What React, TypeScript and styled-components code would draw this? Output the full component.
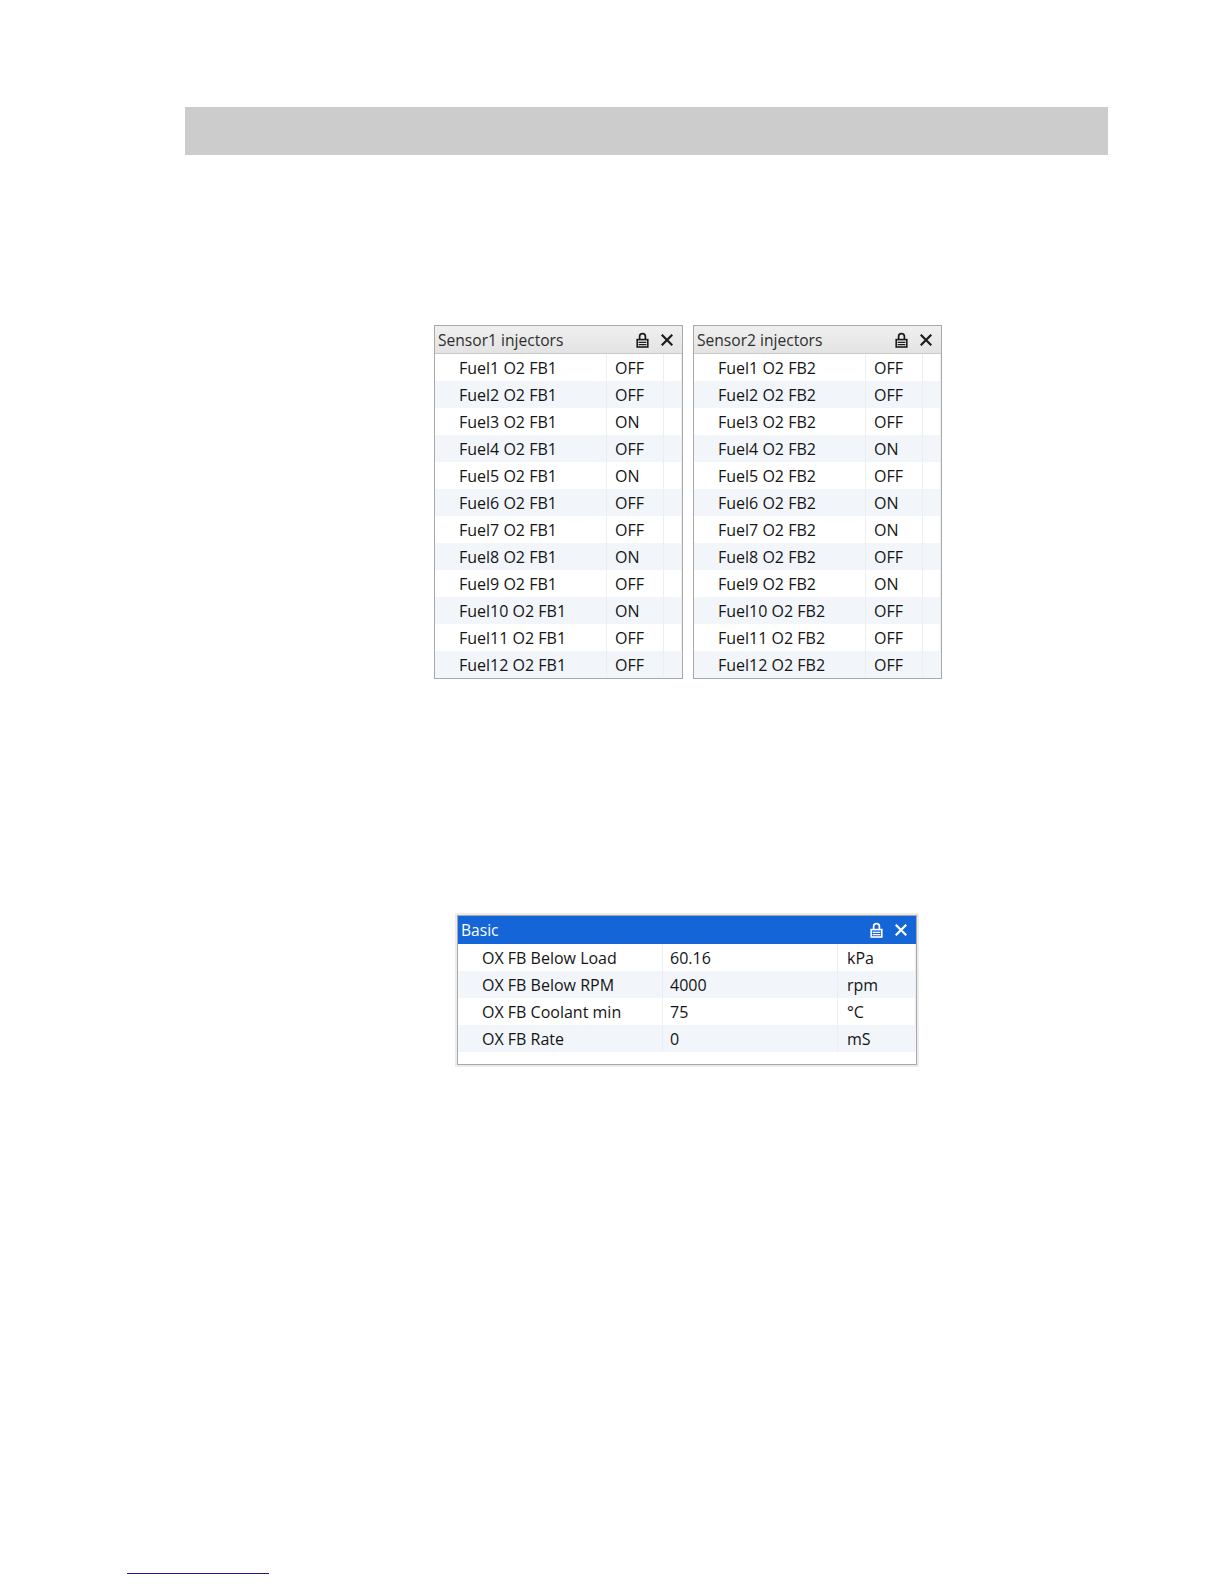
import React, { FC } from 'react'
import styled, { createGlobalStyle } from 'styled-components'

const GlobalStyle = createGlobalStyle`
	html, body {
		margin: 0;
		padding: 0;
		background: #ffffff;
	}
	body {
		font-family: 'Open Sans', 'Noto Sans', 'Liberation Sans', sans-serif;
		color: #141414;
	}
`

const Page = styled.div`
	width: 1224px;
	min-height: 1584px;
	display: flex;
	flex-direction: column;
`

const TopBar = styled.div`
	margin: 107px 0 0 185px;
	width: 923px;
	height: 48px;
	background: #cccccc;
`

const PanelRow = styled.div`
	display: flex;
	gap: 10px;
	margin: 170px 0 0 434px;
`

const Panel = styled.div<{ $width: number; $shadow?: boolean }>`
	width: ${({ $width }) => $width}px;
	border: 1px solid #a9a9a9;
	background: #ffffff;
	box-shadow: ${({ $shadow }) => ($shadow ? '0 0 0 2px #ececec' : 'none')};
`

const Header = styled.div<{ $active?: boolean }>`
	display: flex;
	align-items: center;
	height: 27px;
	padding: 0 9px 0 3px;
	background: ${({ $active }) =>
		$active ? '#1466d8' : 'linear-gradient(#f0f0f0, #e3e3e3)'};
	border-bottom: 1px solid ${({ $active }) => ($active ? '#1466d8' : '#c9c9c9')};
	color: ${({ $active }) => ($active ? '#ffffff' : '#2e2e2e')};
	font-size: 15.6px;
`

const Title = styled.span`
	flex: 1;
	white-space: nowrap;
`

const Tools = styled.div`
	display: flex;
	align-items: center;
	gap: 12px;
`

const Grid = styled.div<{ $cols: string; $pad?: number }>`
	display: grid;
	grid-template-columns: ${({ $cols }) => $cols};
	padding-bottom: ${({ $pad }) => $pad || 0}px;
`

const Cell = styled.div<{ $odd: boolean; $indent: number }>`
	height: 27px;
	display: flex;
	align-items: center;
	padding-left: ${({ $indent }) => $indent}px;
	font-size: 16px;
	white-space: nowrap;
	background: ${({ $odd }) => ($odd ? '#f2f6fa' : '#ffffff')};
	border-right: 1px solid #ebeef2;
	&:last-child {
		border-right: none;
	}
`

const BasicWrap = styled.div`
	margin: 236px 0 0 457px;
`

const FootRule = styled.div`
	margin: 508px 0 0 127px;
	width: 142px;
	height: 1px;
	background: #1b1b8a;
`

const LockIcon: FC<{ color: string }> = ({ color }) => (
	<svg width="13" height="16" viewBox="0 0 13 16" fill="none">
		<path d="M3.6 7.6V4.6a2.9 2.9 0 0 1 5.8 0V7.6" stroke={color} strokeWidth="1.7" />
		<rect x="1.2" y="7.6" width="10.6" height="7.4" stroke={color} strokeWidth="1.6" />
		<path d="M2.6 10.4h7.8M2.6 12.6h7.8" stroke={color} strokeWidth="1.2" />
	</svg>
)

const CloseIcon: FC<{ color: string }> = ({ color }) => (
	<svg width="12" height="12" viewBox="0 0 12 12">
		<path d="M1.5 1.5l9 9M10.5 1.5l-9 9" stroke={color} strokeWidth="2.2" strokeLinecap="square" />
	</svg>
)

type TableProps = {
	title: string
	width: number
	cols: string
	indents: number[]
	rows: string[][]
	active?: boolean
	padBottom?: number
}

const TablePanel: FC<TableProps> = ({ title, width, cols, indents, rows, active, padBottom }) => {
	const iconColor = active ? '#ffffff' : '#1c1c1c'
	return (
		<Panel $width={width} $shadow={active}>
			<Header $active={active}>
				<Title>{title}</Title>
				<Tools>
					<LockIcon color={iconColor} />
					<CloseIcon color={iconColor} />
				</Tools>
			</Header>
			<Grid $cols={cols} $pad={padBottom}>
				{rows.map((row, r) =>
					row.map((text, c) => (
						<Cell key={`${r}-${c}`} $odd={r % 2 === 1} $indent={indents[c]}>
							{text}
						</Cell>
					))
				)}
			</Grid>
		</Panel>
	)
}

const sensor1 = ['OFF', 'OFF', 'ON', 'OFF', 'ON', 'OFF', 'OFF', 'ON', 'OFF', 'ON', 'OFF', 'OFF']
const sensor2 = ['OFF', 'OFF', 'OFF', 'ON', 'OFF', 'ON', 'ON', 'OFF', 'ON', 'OFF', 'OFF', 'OFF']

const fuelRows = (bank: number, states: string[]) =>
	states.map((s, i) => [`Fuel${i + 1} O2 FB${bank}`, s, ''])

const basicRows = [
	['OX FB Below Load', '60.16', 'kPa'],
	['OX FB Below RPM', '4000', 'rpm'],
	['OX FB Coolant min', '75', '°C'],
	['OX FB Rate', '0', 'mS'],
]

const App = () => (
	<Page>
		<GlobalStyle />
		<TopBar />
		<PanelRow>
			<TablePanel
				title="Sensor1 injectors"
				width={247}
				cols="172px 57px 1fr"
				indents={[24, 8, 0]}
				rows={fuelRows(1, sensor1)}
			/>
			<TablePanel
				title="Sensor2 injectors"
				width={247}
				cols="172px 57px 1fr"
				indents={[24, 8, 0]}
				rows={fuelRows(2, sensor2)}
			/>
		</PanelRow>
		<BasicWrap>
			<TablePanel
				title="Basic"
				width={458}
				cols="205px 175px 1fr"
				indents={[24, 7, 9]}
				rows={basicRows}
				active
				padBottom={12}
			/>
		</BasicWrap>
		<FootRule />
	</Page>
)

export default App
